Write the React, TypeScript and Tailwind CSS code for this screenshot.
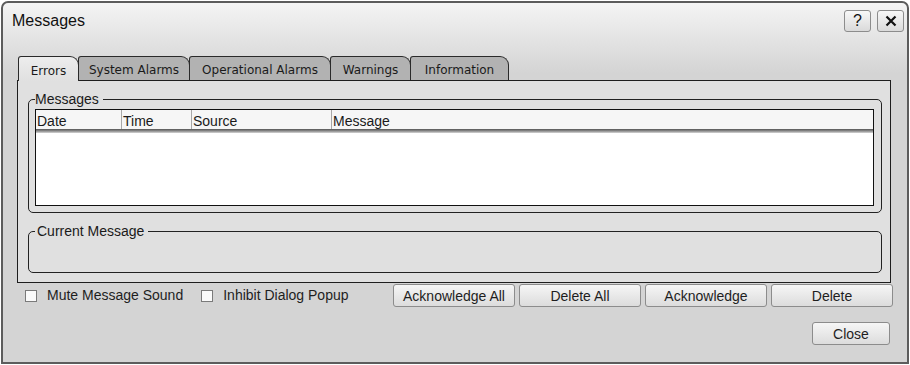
import React from 'react';

const tabs = [
  { label: 'Errors', width: 'w-[61px]', active: true },
  { label: 'System Alarms', width: 'w-[112px]', active: false },
  { label: 'Operational Alarms', width: 'w-[142px]', active: false },
  { label: 'Warnings', width: 'w-[81px]', active: false },
  { label: 'Information', width: 'w-[99px]', active: false },
];

const columns = [
  { label: 'Date', width: 'w-[85px]' },
  { label: 'Time', width: 'w-[70px]' },
  { label: 'Source', width: 'w-[140px]' },
  { label: 'Message', width: 'flex-1' },
];

const actions = ['Acknowledge All', 'Delete All', 'Acknowledge', 'Delete'];

const btn =
  'h-[23px] rounded-[3px] border border-[#8c8c8c] bg-[linear-gradient(to_bottom,#f6f6f6,#dcdcdc)] text-[14px] leading-none text-[#1e1e1e] flex items-center justify-center';

const Checkbox: React.FC<{ label: string }> = ({ label }) => (
  <label className="flex items-center gap-[10px] text-[14px] text-[#1e1e1e]">
    <span className="w-[12px] h-[12px] border border-[#7a7a7a] bg-[#fafafa]" />
    {label}
  </label>
);

const App: React.FC = () => {
  return (
    <div className="w-[910px] h-[365px] bg-white font-['Liberation_Sans',Arial,sans-serif] text-[#1a1a1a]">
      <div className="ml-px mt-px w-[908px] h-[363px] border-2 border-[#5c5c5c] rounded-t-[7px] bg-[linear-gradient(to_bottom,#f4f4f4_0px,#d4d4d4_70px)] flex flex-col">
        {/* title bar */}
        <div className="h-[36px] flex items-center justify-between pl-[9px] pr-[3px]">
          <span className="text-[16px] text-[#111]">Messages</span>
          <div className="flex gap-[6px]">
            <button className="w-[27px] h-[22px] rounded-[3px] border border-[#8c8c8c] bg-[linear-gradient(to_bottom,#f8f8f8,#dadada)] text-[16px] leading-none text-[#111] flex items-center justify-center">
              ?
            </button>
            <button className="w-[27px] h-[22px] rounded-[3px] border border-[#8c8c8c] bg-[linear-gradient(to_bottom,#f8f8f8,#dadada)] flex items-center justify-center">
              <svg width="12" height="12" viewBox="0 0 12 12">
                <path d="M1.5 1.5 L10.5 10.5 M10.5 1.5 L1.5 10.5" stroke="#111" strokeWidth="2.2" />
              </svg>
            </button>
          </div>
        </div>

        {/* tabs */}
        <div className="ml-[15px] mt-[17px] h-[24px] flex items-end font-['DejaVu_Sans',sans-serif]">
          {tabs.map((t, i) =>
            t.active ? (
              <div
                key={t.label}
                className={`${t.width} h-[25px] -mb-px relative z-10 border-t border-l border-r border-[#2a2a2a] rounded-tl-[3px] rounded-tr-[9px] bg-[linear-gradient(to_bottom,#ededed,#e0e0e0)] flex items-center justify-center pt-[3px] text-[12px]`}
              >
                {t.label}
              </div>
            ) : (
              <div
                key={t.label}
                className={`${t.width} h-[24px] ${i > 0 ? '-ml-px' : ''} border-t border-l border-r border-[#2a2a2a] rounded-tl-[3px] rounded-tr-[9px] bg-[#b2b2b2] flex items-center justify-center pt-[2px] text-[12px] text-[#1a1a1a]`}
              >
                {t.label}
              </div>
            )
          )}
        </div>

        {/* panel */}
        <div className="ml-[14px] w-[874px] h-[203px] border border-[#1e1e1e] bg-[#e0e0e0] pl-[10px] pr-[8px] pt-[10px]">
          <fieldset className="border border-[#222] rounded-[5px] pl-[6px] pr-[7px] pb-[6px]">
            <legend className="text-[14px] leading-[16px] pr-[4px]">Messages</legend>
            <div className="mt-[2px] h-[97px] border border-[#111] bg-white flex flex-col">
              <div className="h-[19px] bg-[#f6f6f6] flex text-[14px] leading-[16px]">
                {columns.map((c, i) => (
                  <div
                    key={c.label}
                    className={`${c.width} h-full pt-[3px] ${i === 0 ? 'pl-[1px]' : 'pl-[1px] border-l border-[#a8a8a8]'}`}
                  >
                    {c.label}
                  </div>
                ))}
              </div>
              <div className="h-[4px] bg-[linear-gradient(to_bottom,#555,#8c8c8c,#d6d6d6)]" />
              <div className="flex-1 bg-white" />
            </div>
          </fieldset>

          <fieldset className="mt-[10px] border border-[#222] rounded-[5px] pl-[6px] pr-[7px]">
            <legend className="text-[14px] leading-[16px] pl-[2px] pr-[4px]">Current Message</legend>
            <div className="h-[33px]" />
          </fieldset>
        </div>

        {/* action row */}
        <div className="mt-[1px] flex items-center pl-[22px] pr-[14px]">
          <Checkbox label="Mute Message Sound" />
          <div className="ml-[18px]">
            <Checkbox label="Inhibit Dialog Popup" />
          </div>
          <div className="ml-auto flex gap-[4px]">
            {actions.map((a) => (
              <button key={a} className={`${btn} w-[122px]`}>
                {a}
              </button>
            ))}
          </div>
        </div>

        <div className="mt-[15px] flex justify-end pr-[17px]">
          <button className={`${btn} w-[78px]`}>Close</button>
        </div>
      </div>
    </div>
  );
};

export default App;
